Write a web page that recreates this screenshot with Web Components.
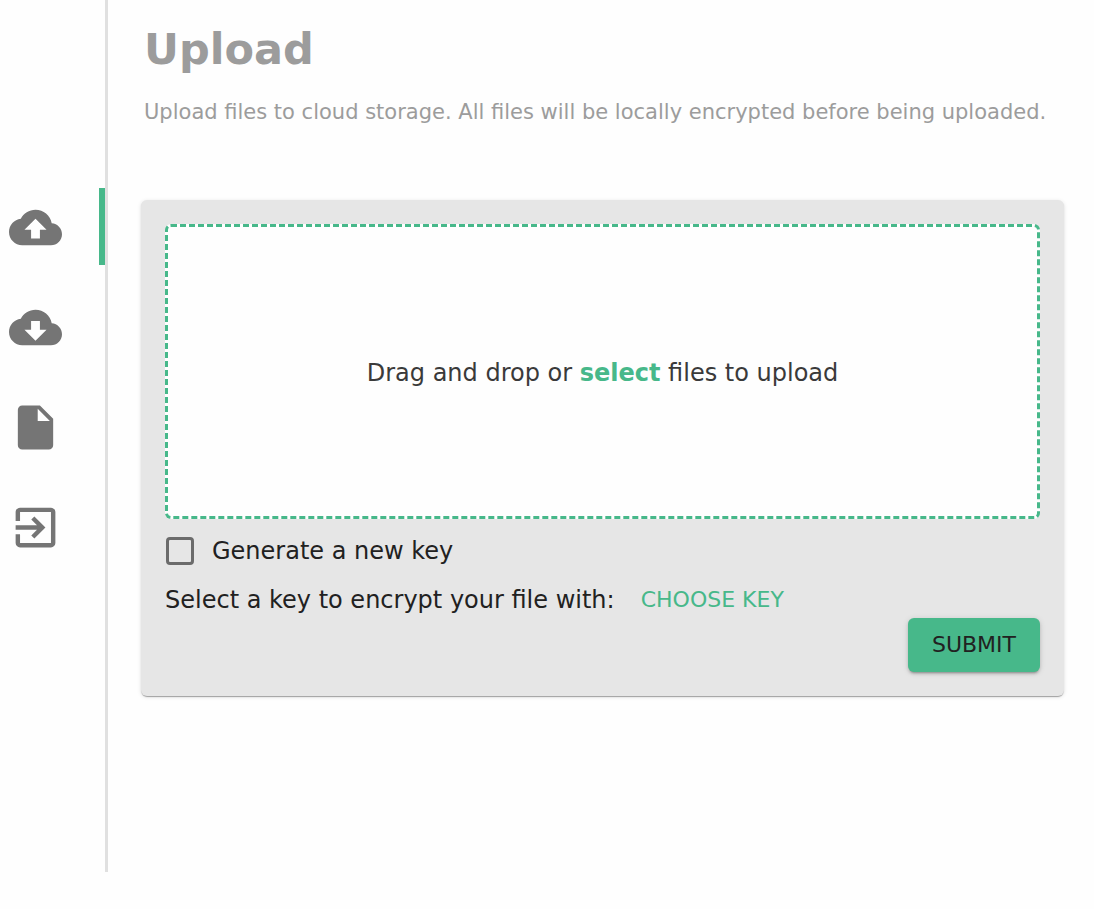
<!DOCTYPE html>
<html lang="en">
<head>
<meta charset="utf-8">
<meta name="viewport" content="width=device-width, initial-scale=1">
<title>Upload</title>
<style>
  :root {
    --accent: #47b88a;
    --icon: #757575;
    --muted: #9c9c9c;
    --text: #212121;
    --panel: #e6e6e6;
    --line: #e0e0e0;
  }
  body {
    margin: 0;
    background: #fefefe;
    color: var(--text);
    font: 24px/36px Verdana, "DejaVu Sans", sans-serif;
  }
</style>
</head>
<body>
<upload-app></upload-app>

<script>
const define = (name, html, setup) => {
  const template = document.createElement("template");
  template.innerHTML = html;
  customElements.define(name, class extends HTMLElement {
    constructor() {
      super();
      this.attachShadow({ mode: "open" }).append(template.content.cloneNode(true));
    }
    connectedCallback() {
      if (setup) setup(this, this.shadowRoot);
    }
  });
};

const icons = {
  upload: "M19.35 10.04C18.67 6.59 15.64 4 12 4 9.11 4 6.6 5.64 5.35 8.04 2.34 8.36 0 10.91 0 14c0 3.31 2.69 6 6 6h13c2.76 0 5-2.24 5-5 0-2.64-2.05-4.78-4.65-4.96zM14 13v4h-4v-4H7l5-5 5 5h-3z",
  download: "M19.35 10.04C18.67 6.59 15.64 4 12 4 9.11 4 6.6 5.64 5.35 8.04 2.34 8.36 0 10.91 0 14c0 3.31 2.69 6 6 6h13c2.76 0 5-2.24 5-5 0-2.64-2.05-4.78-4.65-4.96zM17 13l-5 5-5-5h3V9h4v4h3z",
  file: "M6 2c-1.1 0-1.99.9-1.99 2L4 20c0 1.1.89 2 1.99 2H18c1.1 0 2-.9 2-2V8l-6-6H6zm7 7V3.5L18.5 9H13z",
  exit: "M10.09 15.59L11.5 17l5-5-5-5-1.41 1.41L12.67 11H3v2h9.67l-2.58 2.59zM19 3H5c-1.11 0-2 .9-2 2v4h2V5h14v14H5v-4H3v4c0 1.1.89 2 2 2h14c1.1 0 2-.9 2-2V5c0-1.1-.9-2-2-2z"
};

define("nav-item", `
  <style>
    :host { display: block; }
    a {
      display: flex;
      align-items: center;
      box-sizing: border-box;
      height: 77px;
      padding: 1px 0 0 9px;
      border-right: 6px solid transparent;
      color: var(--icon);
    }
    :host([active]) a { border-right-color: var(--accent); }
    svg { width: 53px; height: 53px; fill: currentColor; }
  </style>
  <a href="#"><svg viewBox="0 0 24 24" aria-hidden="true"><path/></svg></a>
`, (host, root) => {
  root.querySelector("a").setAttribute("aria-label", host.getAttribute("label"));
  root.querySelector("path").setAttribute("d", icons[host.getAttribute("icon")]);
});

define("side-nav", `
  <style>
    :host { display: block; }
    nav {
      display: flex;
      flex-direction: column;
      gap: 23px;
      box-sizing: border-box;
      width: 108px;
      height: 100%;
      padding-top: 188px;
      border-right: 3px solid var(--line);
    }
  </style>
  <nav aria-label="Main"><slot></slot></nav>
`);

define("page-header", `
  <style>
    :host { display: block; padding: 0 3px; color: var(--muted); }
    h1 { margin: 0; font-size: 43px; line-height: 54px; font-weight: 700; }
    p { margin: 0; padding-top: 20px; font-size: 21px; line-height: 32px; }
  </style>
  <header>
    <h1><slot name="title"></slot></h1>
    <p><slot></slot></p>
  </header>
`);

define("paper-card", `
  <style>
    :host {
      display: block;
      padding: 24px;
      border-radius: 6px;
      background: var(--panel);
      box-shadow: 0 2px 1px -1px rgba(0,0,0,.2), 0 1px 1px rgba(0,0,0,.14), 0 1px 4px rgba(0,0,0,.12);
    }
  </style>
  <slot></slot>
`);

define("drop-zone", `
  <style>
    :host {
      display: flex;
      align-items: center;
      justify-content: center;
      box-sizing: border-box;
      min-height: 295px;
      padding-top: 2px;
      border: 3px dashed var(--accent);
      border-radius: 6px;
      background: #fefefe;
      color: #3a3a3a;
    }
    a { color: var(--accent); font-weight: 700; text-decoration: none; }
  </style>
  <div>Drag and drop or <a href="#">select</a> files to upload</div>
`);

define("check-field", `
  <style>
    :host { display: block; }
    label { display: flex; align-items: center; gap: 18px; }
    input {
      appearance: none;
      box-sizing: border-box;
      width: 28px;
      height: 28px;
      margin: 0;
      border: 3px solid #6b6b6b;
      border-radius: 4px;
    }
    input:checked { background: var(--accent); border-color: var(--accent); }
  </style>
  <label><input type="checkbox"><slot></slot></label>
`);

define("md-button", `
  <style>
    :host { display: inline-block; }
    button {
      display: block;
      margin: 0;
      border: 0;
      border-radius: 6px;
      padding: 0 12px;
      background: none;
      color: var(--accent);
      font: inherit;
      font-size: 22px;
      line-height: 36px;
      cursor: pointer;
    }
    :host([variant="contained"]) button {
      padding: 9px 24px;
      background: var(--accent);
      color: var(--text);
      box-shadow: 0 3px 2px -2px rgba(0,0,0,.2), 0 2px 3px rgba(0,0,0,.14), 0 1px 6px rgba(0,0,0,.12);
    }
  </style>
  <button type="button"><slot></slot></button>
`);

define("upload-form", `
  <style>
    :host { display: block; }
    form { display: flex; flex-direction: column; }
    check-field { padding: 14px 1px 0; }
    .key { display: flex; align-items: center; gap: 14px; padding-top: 13px; }
    .actions { display: flex; justify-content: flex-end; }
  </style>
  <form>
    <drop-zone></drop-zone>
    <check-field>Generate a new key</check-field>
    <div class="key"><span>Select a key to encrypt your file with:</span><md-button>CHOOSE KEY</md-button></div>
    <div class="actions"><md-button variant="contained">SUBMIT</md-button></div>
  </form>
`);

define("upload-app", `
  <style>
    :host { display: flex; box-sizing: border-box; min-height: 100vh; }
    side-nav { flex: none; margin-bottom: 37px; }
    main { flex: 1; min-width: 0; padding: 22px 30px 36px 33px; }
    paper-card { margin-top: 72px; }
  </style>
  <side-nav>
    <nav-item active icon="upload" label="Upload"></nav-item>
    <nav-item icon="download" label="Download"></nav-item>
    <nav-item icon="file" label="Files"></nav-item>
    <nav-item icon="exit" label="Log out"></nav-item>
  </side-nav>
  <main>
    <page-header><span slot="title">Upload</span>Upload files to cloud storage. All files will be locally encrypted before being uploaded.</page-header>
    <paper-card><upload-form></upload-form></paper-card>
  </main>
`);
</script>
</body>
</html>
